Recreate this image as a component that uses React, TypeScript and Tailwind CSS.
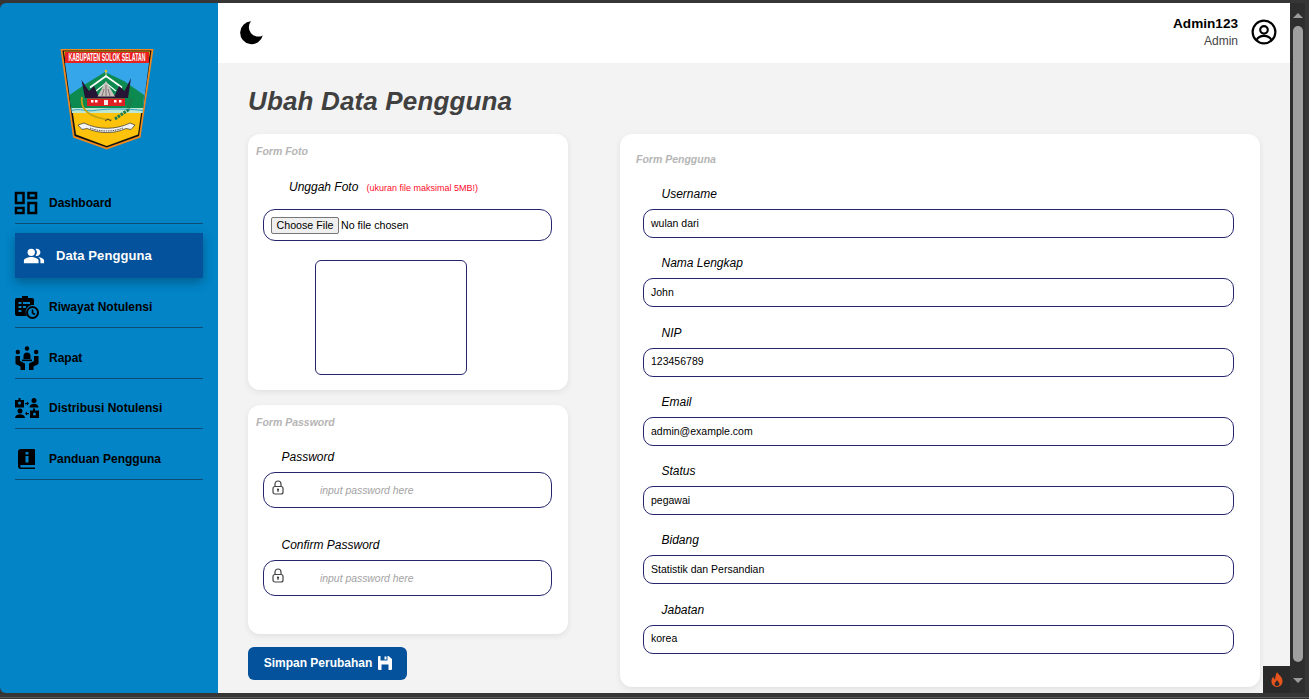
import React from "react";
import { MdOutlineDashboard, MdPeopleAlt } from "react-icons/md";

const F = "font-['Liberation_Sans',Arial,sans-serif]";

function Logo() {
  return (
    <svg width="94" height="103" viewBox="0 0 94 103">
      <path d="M0.500 1H93.500L80.500 89.500L46.700 101.500L13 89.500Z" fill="#f08a1c" />
      <path d="M2.500 2.500H91.500L79 88L46.700 99.500L14.500 88Z" fill="#111" />
      <path d="M4 3.500H90L78 86.500L46.700 98L16 86.500Z" fill="#fdc30c" />
      <path d="M5 15H89L82.500 65H12Z" fill="#35a6ea" />
      <path d="M9.500 47L24 37L45 24L64 33L84 47L83 60H11Z" fill="#0c8a50" />
      <path d="M11.500 60H83L82.500 65H12Z" fill="#bfe6d0" />
      <path d="M11.500 62.500C20 60 27 64 35 62.500S60 60 83 62.500" stroke="#2ea3c6" strokeWidth="1" fill="none" />
      <rect x="5" y="4" width="84" height="11" fill="#e8201f" />
      <text transform="scale(0.52 1)" x="90.400" y="13" textAnchor="middle" fontSize="10" fontWeight="700" fill="#fff" fontFamily="Liberation Sans, Arial, sans-serif">KABUPATEN SOLOK SELATAN</text>
      <circle cx="46" cy="23" r="1.300" fill="#e8c01c" />
      <path d="M46 24V30" stroke="#d8d8a0" strokeWidth="1" />
      <path d="M30 39.500L46 28L62 39.500" stroke="#fff" strokeWidth="1.800" fill="none" />
      <path d="M36 43L46 35L56 43" stroke="#fff" strokeWidth="1.200" fill="none" />
      <path d="M21.500 32L25 50H68L71 30L64.500 43L59 38L55 47H38L34 38L29 43Z" fill="#251433" />
      <path d="M46 33L37.500 48.500H55Z" fill="#c9c2bb" />
      <path d="M46 37V48M42 48L44 41M50 48L48 41" stroke="#6b5f6b" strokeWidth="0.800" />
      <rect x="27" y="50.500" width="38" height="7.500" fill="#e11f23" />
      <rect x="31" y="52" width="2.500" height="2.500" fill="#fff" /><rect x="35" y="52" width="2.500" height="2.500" fill="#fff" /><rect x="44" y="52" width="4" height="5" fill="#eee" /><rect x="54" y="52" width="2.500" height="2.500" fill="#fff" /><rect x="59" y="52" width="2.500" height="2.500" fill="#fff" />
      <path d="M22 49C20 60 27 70 52 72" stroke="#c2a314" strokeWidth="1.800" fill="none" />
      <path d="M45 73L48 71L51 73" stroke="#222" strokeWidth="0.800" fill="none" />
      <path d="M55 71L68 62L72 50" stroke="#1f7a4a" strokeWidth="3" strokeDasharray="2.500 1" fill="none" />
      <path d="M18 77L24 75C38 82 56 82 70 75L75 77L71 81.500L66 80.500C54 86 40 86 27 80.500L22 81.500Z" fill="#f4f4f4" stroke="#333" strokeWidth="0.700" />
      <path d="M30 80C40 84 53 84 63 80" stroke="#555" strokeWidth="1" strokeDasharray="1.500 0.800" fill="none" />
    </svg>
  );
}

function Rapat() {
  return (
    <svg width="24" height="24" viewBox="0 0 24 24" fill="#000">
      <circle cx="12" cy="2.500" r="2.200" />
      <path d="M8.500 10a3.500 3.500 0 0 1 7 0v3h-7z" />
      <rect x="7" y="13.500" width="10" height="1.600" />
      <circle cx="2.800" cy="6" r="2.200" /><circle cx="21.200" cy="6" r="2.200" />
      <path d="M0.500 10h4.500v5l5 2.500V24H5.500v-3.500L.5 18z" />
      <path d="M23.500 10H19v5l-5 2.500V24h4.500v-3.500l5-2.500z" />
    </svg>
  );
}

function Riwayat() {
  return (
    <svg width="24" height="24" viewBox="0 0 24 24">
      <path d="M5 3h2V1h6v2h4a2 2 0 0 1 2 2v5h-2a7 7 0 0 0-5 11H2a2 2 0 0 1-2-2V5a2 2 0 0 1 2-2z" fill="#000" />
      <rect x="3.500" y="7" width="3" height="2" fill="#0284c7" />
      <rect x="8" y="7" width="7" height="2" fill="#0284c7" />
      <rect x="3.500" y="11" width="3" height="2" fill="#0284c7" />
      <rect x="8" y="11" width="3" height="2" fill="#0284c7" />
      <rect x="3.500" y="15" width="3" height="2" fill="#0284c7" />
      <circle cx="17.500" cy="17.500" r="5.500" fill="#0284c7" stroke="#000" strokeWidth="2" />
      <path d="M17.500 14.500v3.500l2.500 1.500" stroke="#000" strokeWidth="1.600" fill="none" />
    </svg>
  );
}

function Distribusi() {
  return (
    <svg width="24" height="20" viewBox="0 0 24 20" fill="#000">
      <path d="M0 2h3.500V0h2v2H9v7.500H0z" />
      <circle cx="4.500" cy="5" r="1.500" fill="#0284c7" />
      <circle cx="19" cy="2.500" r="2.500" />
      <path d="M14.500 9.500a4.500 3.800 0 0 1 9 0z" />
      <circle cx="5" cy="13" r="2.500" />
      <path d="M0 20a5 3.800 0 0 1 10 0z" />
      <path d="M15 12.500h3v-2h2v2h4V20h-9z" />
      <circle cx="19.500" cy="16" r="1.500" fill="#0284c7" />
      <path d="M10 5h2V3.500L14 5.500 12 7.500V6.200h-2zM14 15h-2v-1.500L10 15.500l2 2v-1.300h2z" />
    </svg>
  );
}

function Panduan() {
  return (
    <svg width="17" height="20" viewBox="0 0 17 20" fill="#000">
      <path d="M3 0h13a1 1 0 0 1 1 1v15H3.500a1.200 1.200 0 0 0 0 2.500H17V20H3a3 3 0 0 1-3-3V3a3 3 0 0 1 3-3z" />
      <rect x="7.500" y="3" width="3" height="2.500" fill="#0284c7" />
      <rect x="7.500" y="7" width="3" height="6.500" fill="#0284c7" />
    </svg>
  );
}

function NavItem({ icon, label, box }: { icon: React.ReactNode; label: string; box: string }) {
  return (
    <div className={`${box} flex items-center border-b border-[#0f4c75]`}>
      <div className="w-[34px] flex justify-start shrink-0">{icon}</div>
      <span className="text-[12px] font-bold text-black">{label}</span>
    </div>
  );
}

function Field({ label, value }: { label: string; value: string }) {
  return (
    <div className="flex flex-col">
      <label className="pl-[18.5px] text-[12px] italic text-black h-[15px] leading-[15px] mb-[7px]">{label}</label>
      <div className="h-[29px] rounded-[10px] border border-[#25256e] bg-white pl-[7px] flex items-center text-[10.5px] text-black">{value}</div>
    </div>
  );
}

function Lock() {
  return (
    <svg width="12" height="15" viewBox="0 0 12 15" fill="none" className="ml-[8px] mb-[5px]">
      <path d="M3 7V4a3 3 0 0 1 6 0v3" stroke="#444" strokeWidth="1.200" />
      <rect x="1" y="6.500" width="10" height="7.500" rx="2" stroke="#444" strokeWidth="1.200" />
      <circle cx="6" cy="9.500" r="1.100" fill="#333" />
      <rect x="5.500" y="10" width="1" height="2" fill="#333" />
    </svg>
  );
}

function PasswordField({ label }: { label: string }) {
  return (
    <div className="flex flex-col">
      <label className="pl-[18.5px] text-[12px] italic text-black leading-[15px] h-[15px] mb-[7px] mt-[1px]">{label}</label>
      <div className="h-[36px] w-[289px] rounded-[12px] border border-[#25256e] bg-white flex items-center">
        <Lock />
        <span className="ml-[36px] mt-[2px] text-[10.4px] italic text-[#a3a3a3]">input password here</span>
      </div>
    </div>
  );
}

export default function App() {
  return (
    <div className={`${F} w-[1309px] h-[699px] bg-[#363636] overflow-hidden flex flex-col pt-[3px] relative`}>
      <div className="flex h-[690px] shrink-0">
        <aside className="w-[218px] shrink-0 bg-[#0284c7] rounded-tl-[6px] rounded-bl-[6px] flex flex-col px-[15px]">
          <div className="h-[179px] flex justify-start pl-[45px] pt-[45px] shrink-0"><Logo /></div>
          <nav className="flex flex-col">
            <NavItem box="h-[42px]" icon={<MdOutlineDashboard size={30} className="-ml-[3.75px]" />} label="Dashboard" />
            <div className="mt-[9px] mb-[4px] h-[45px] bg-[#03529b] flex items-center pl-[8px] shadow-[0_4px_10px_rgba(0,0,0,0.3)]">
              <div className="w-[33px] shrink-0"><MdPeopleAlt size={22} className="text-white" /></div>
              <span className="text-[13px] font-bold text-white tracking-[0.1px]">Data Pengguna</span>
            </div>
            <NavItem box="h-[46px] pt-[5px]" icon={<Riwayat />} label="Riwayat Notulensi" />
            <NavItem box="h-[51px] pt-[10px]" icon={<Rapat />} label="Rapat" />
            <NavItem box="h-[50px] pt-[9px]" icon={<Distribusi />} label="Distribusi Notulensi" />
            <NavItem box="h-[51px] pt-[10px]" icon={<div className="pl-[3px]"><Panduan /></div>} label="Panduan Pengguna" />
          </nav>
        </aside>

        <main className="w-[1072px] shrink-0 bg-[#f3f3f3] flex flex-col overflow-hidden">
          <header className="h-[60px] bg-white flex items-center justify-between pl-[21px] pr-[13px] shrink-0">
            <svg width="25" height="25" viewBox="0 0 24 24" fill="#000" className="mb-[2px]"><path d="M11.500 1.200a11 11 0 1 0 11.300 13.600A9 9 0 0 1 11.500 1.200z" /></svg>
            <div className="flex items-center gap-[13px]">
              <div className="text-right">
                <div className="text-[13.6px] font-bold text-black leading-[16px] -mt-[1px]">Admin123</div>
                <div className="text-[12px] text-[#444] leading-[16px] mt-[1px]">Admin</div>
              </div>
              <svg width="26" height="26" viewBox="0 0 24 24" fill="none" stroke="#000" strokeWidth="2" className="mb-[2px]"><circle cx="12" cy="12" r="10.500" /><circle cx="12" cy="10" r="3.500" /><path d="M5 19.500c1.500-3 4-4 7-4s5.500 1 7 4" /></svg>
            </div>
          </header>
          <div className="flex-1 flex pl-[30px] pr-[30px] gap-[52px] min-h-0">
            <div className="w-[320px] shrink-0 flex flex-col">
              <h1 className="text-[26px] leading-[30px] font-bold italic text-[#404040] mt-[23px] mb-[18px] tracking-[0.15px]">Ubah Data Pengguna</h1>
              <section className="h-[256px] bg-white rounded-[12px] shadow-[0_2px_6px_rgba(0,0,0,0.08)] pt-[11px] px-[15px]">
                <div className="-ml-[7px] text-[10.5px] font-bold italic text-[#b5b5b5] leading-[13px]">Form Foto</div>
                <div className="mt-[20px] pl-[26px] flex items-baseline gap-[8px]">
                  <span className="text-[12px] italic text-black">Unggah Foto</span>
                  <span className="text-[9px] text-[#ff0a2a]">(ukuran file maksimal 5MB!)</span>
                </div>
                <div className="mt-[13px] h-[32px] w-[289px] rounded-[12px] border border-[#25256e] flex items-center pl-[7px] text-black whitespace-nowrap">
                  <span className="h-[17px] w-[68px] bg-[#efefef] border border-[#767676] rounded-[2px] flex items-center justify-center text-[10.67px] mr-[2px]">Choose File</span>
                  <span className="text-[10.67px]">No file chosen</span>
                </div>
                <div className="mt-[19px] ml-[52px] w-[152px] h-[115px] rounded-[6px] border border-[#25256e]" />
              </section>
              <section className="mt-[15px] h-[229px] bg-white rounded-[12px] shadow-[0_2px_6px_rgba(0,0,0,0.08)] pt-[11px] px-[15px]">
                <div className="-ml-[7px] text-[10.5px] font-bold italic text-[#b5b5b5] leading-[13px] mb-[20px]">Form Password</div>
                <PasswordField label="Password" />
                <div className="mt-[29px]"><PasswordField label="Confirm Password" /></div>
              </section>
              <button className="mt-[13px] w-[159px] h-[33px] bg-[#03529b] rounded-[6px] flex items-center justify-center gap-[6px] pl-[1px] text-white text-[12px] font-bold shrink-0 pb-[1px]">
                Simpan Perubahan
                <svg width="14" height="14" viewBox="0 0 14 14" fill="#fff"><path d="M0 1a1 1 0 0 1 1-1h1.500v4.500h7V0h1L14 3v10a1 1 0 0 1-1 1H1a1 1 0 0 1-1-1z" /><rect x="6.500" y="0.500" width="2" height="3" /><rect x="3.500" y="8.500" width="7" height="5.500" fill="#03529b" /></svg>
              </button>
            </div>
            <section className="flex-1 mt-[71px] mb-[6px] bg-white rounded-[12px] shadow-[0_2px_6px_rgba(0,0,0,0.08)] pt-[19px] pl-[23px] pr-[26px]">
              <div className="-ml-[7px] text-[10.5px] font-bold italic text-[#b5b5b5] leading-[13px] mb-[21px]">Form Pengguna</div>
              <div className="flex flex-col gap-[18.3px]">
                <Field label="Username" value="wulan dari" />
                <Field label="Nama Lengkap" value="John" />
                <Field label="NIP" value="123456789" />
                <Field label="Email" value="admin@example.com" />
                <Field label="Status" value="pegawai" />
                <Field label="Bidang" value="Statistik dan Persandian" />
                <Field label="Jabatan" value="korea" />
              </div>
            </section>
          </div>
        </main>

        <div className="w-[15px] shrink-0 bg-[#2e2e2e] flex flex-col items-center relative">
          <div className="mt-[10px] w-0 h-0 border-l-[5px] border-r-[5px] border-b-[5px] border-l-transparent border-r-transparent border-b-[#9a9a9a]" />
          <div className="mt-[8px] w-[10px] flex-1 mb-[16px] rounded-[5px] bg-[#9f9f9f]" />
          <div className="mb-[10px] w-0 h-0 border-l-[5px] border-r-[5px] border-t-[5px] border-l-transparent border-r-transparent border-t-[#9a9a9a]" />
          <div className="absolute bottom-0 -left-[27px] w-[27px] h-[27px] bg-[#2a2a2a] flex items-center justify-center">
            <svg width="12" height="15" viewBox="0 0 12 15" fill="#e8541c"><path d="M6 0c1 2.500 5.500 4.500 5.500 9A5.500 5.500 0 0 1 6 15 5.500 5.500 0 0 1 .5 9c0-2 1-3.500 2-4.500 0 1.500.5 2.500 1.500 3C4.500 5 4.500 2.500 6 0zM6 8c-.5 1.500-2.500 2.500-2.500 4.200A2.500 2.500 0 0 0 6 14a2.500 2.500 0 0 0 2.500-1.800C8.500 10.500 6.500 9.500 6 8z" fillRule="evenodd" /></svg>
          </div>
        </div>
      </div>
      <div className="mt-[4px] h-[1px] bg-[#5a5a5a] shrink-0" />
    </div>
  );
}
